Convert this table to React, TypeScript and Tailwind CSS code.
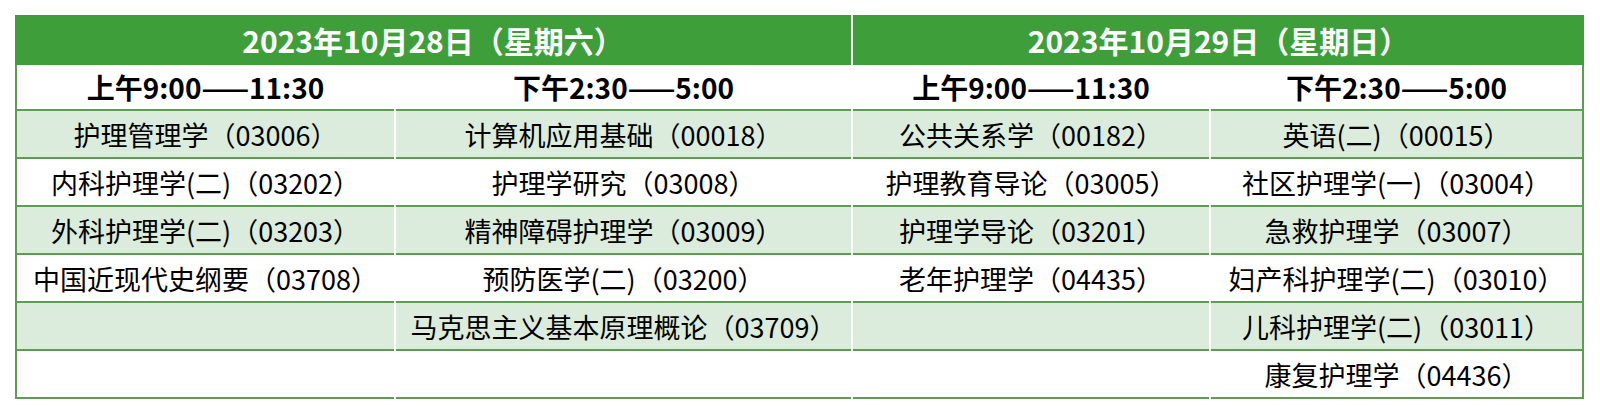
import React from 'react'

const days = ['2023年10月28日（星期六）', '2023年10月29日（星期日）']
const times = ['上午9:00——11:30', '下午2:30——5:00', '上午9:00——11:30', '下午2:30——5:00']

const columns: string[][] = [
  ['护理管理学（03006）', '内科护理学(二)（03202）', '外科护理学(二)（03203）', '中国近现代史纲要（03708）', '', ''],
  ['计算机应用基础（00018）', '护理学研究（03008）', '精神障碍护理学（03009）', '预防医学(二)（03200）', '马克思主义基本原理概论（03709）', ''],
  ['公共关系学（00182）', '护理教育导论（03005）', '护理学导论（03201）', '老年护理学（04435）', '', ''],
  ['英语(二)（00015）', '社区护理学(一)（03004）', '急救护理学（03007）', '妇产科护理学(二)（03010）', '儿科护理学(二)（03011）', '康复护理学（04436）']
]

const font = { fontFamily: '"Noto Sans CJK SC", "Noto Sans", sans-serif' }

const App = () => {
  const rows = [0, 1, 2, 3, 4, 5]
  return (
    <div className="min-h-[416px] bg-white pl-[15px] pt-[15px]" style={font}>
      <div className="w-[1569px]">
        {/* date header */}
        <div className="grid h-[50px] grid-cols-[836px_731px] gap-x-[2px] bg-white">
          {days.map((d) => (
            <div
              key={d}
              className="flex items-center justify-center bg-[#3e9f3a] text-[30px] font-bold leading-none text-white"
            >
              {d}
            </div>
          ))}
        </div>

        {/* body */}
        <div className="grid grid-cols-[377px_455px_356px_371px] gap-x-[2px] border-x-2 border-[#5e9c53] bg-white">
          {times.map((t, i) => (
            <div
              key={'t' + i}
              className="flex h-[46px] items-center justify-center border-b-2 border-[#5e9c53] bg-white text-[28px] font-bold leading-none text-black"
            >
              {t}
            </div>
          ))}
          {rows.map((r) =>
            columns.map((col, c) => (
              <div
                key={r + '-' + c}
                className={
                  'flex h-[48px] items-center justify-center border-b-2 border-[#5e9c53] text-[27px] leading-none text-black ' +
                  (r % 2 === 0 ? 'bg-[#dcecdc]' : 'bg-white')
                }
              >
                {col[r]}
              </div>
            ))
          )}
        </div>
      </div>
    </div>
  )
}

export default App
